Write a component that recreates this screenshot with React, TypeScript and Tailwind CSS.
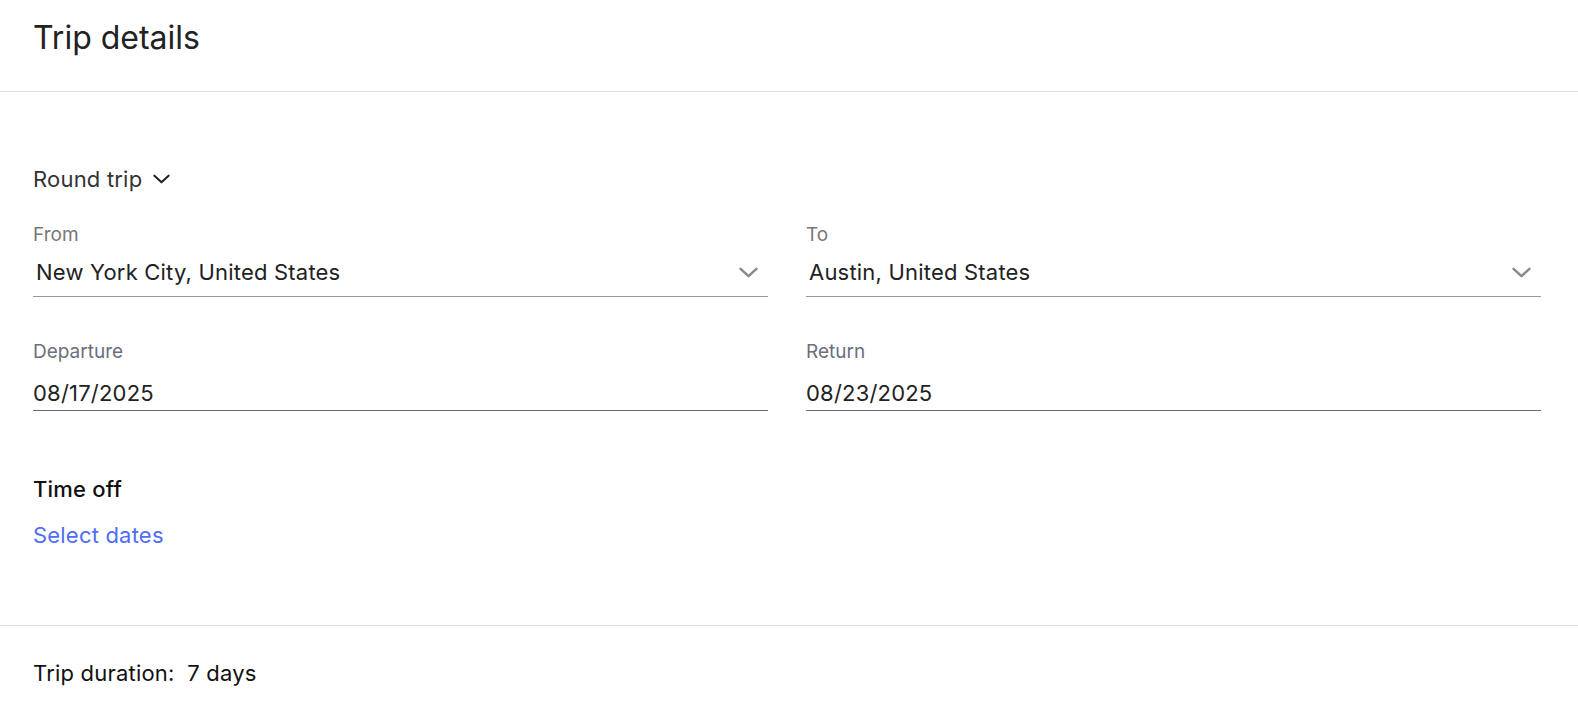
import React from 'react';

const Chevron: React.FC<{ className?: string; strokeWidth?: number }> = ({ className, strokeWidth = 2 }) => (
  <svg viewBox="0 0 18 10" fill="none" stroke="currentColor" strokeWidth={strokeWidth} strokeLinecap="round" strokeLinejoin="round" className={className}>
    <path d="M1.5 1.5l7.5 7 7.5-7" />
  </svg>
);

const SelectField: React.FC<{ label: string; value: string }> = ({ label, value }) => (
  <div className="flex flex-col">
    <span className="text-[19px] leading-6 text-[#777777]">{label}</span>
    <div className="mt-[11px] flex items-center justify-between border-b border-[#999999] pb-[10px] pl-[3px] pr-[10px]">
      <span className="text-[22px] leading-7 tracking-[0.2px] text-[#222222]">{value}</span>
      <Chevron className="w-[19px] h-[11px] text-[#8a8a8a]" strokeWidth={2.4} />
    </div>
  </div>
);

const DateField: React.FC<{ label: string; value: string }> = ({ label, value }) => (
  <div className="flex flex-col">
    <span className="text-[19px] leading-6 text-[#6b6f7b]">{label}</span>
    <div className="mt-[15px] border-b border-[#6b6f7b] pb-[3px]">
      <span className="text-[22px] leading-7 tracking-[0.2px] text-[#222222]">{value}</span>
    </div>
  </div>
);

export default function App() {
  return (
    <div className="h-screen overflow-hidden bg-white" style={{ fontFamily: 'Inter, "Noto Sans", sans-serif' }}>
      <div className="h-[92px] border-b border-[#e0e0e0] px-[33px] pt-[18px]">
        <h1 className="text-[32px] leading-10 text-[#222222]">Trip details</h1>
      </div>

      <div className="pl-[33px] pr-[37px] pt-[73px] pb-[76px] border-b border-[#e0e0e0]">
        <button className="flex items-center gap-[11px] text-[22px] leading-7 tracking-[0.2px] text-[#333333]">
          Round trip
          <Chevron className="w-[17px] h-[10px] text-[#222222]" strokeWidth={2.2} />
        </button>

        <div className="mt-[30px] grid grid-cols-2 gap-x-[38px]">
          <SelectField label="From" value="New York City, United States" />
          <SelectField label="To" value="Austin, United States" />
        </div>

        <div className="mt-[43px] grid grid-cols-2 gap-x-[38px]">
          <DateField label="Departure" value="08/17/2025" />
          <DateField label="Return" value="08/23/2025" />
        </div>

        <div className="mt-[64px] flex flex-col">
          <span className="text-[22px] leading-7 font-medium tracking-[0.2px] text-[#111111]">Time off</span>
          <a href="#" className="mt-[18px] text-[22px] leading-7 tracking-[0.2px] text-[#4f6ef7]">Select dates</a>
        </div>
      </div>

      <div className="px-[33px] pt-[33px]">
        <p className="text-[22px] leading-7 tracking-[0.2px] text-[#111111] whitespace-pre">Trip duration:  7 days</p>
      </div>
    </div>
  );
}
